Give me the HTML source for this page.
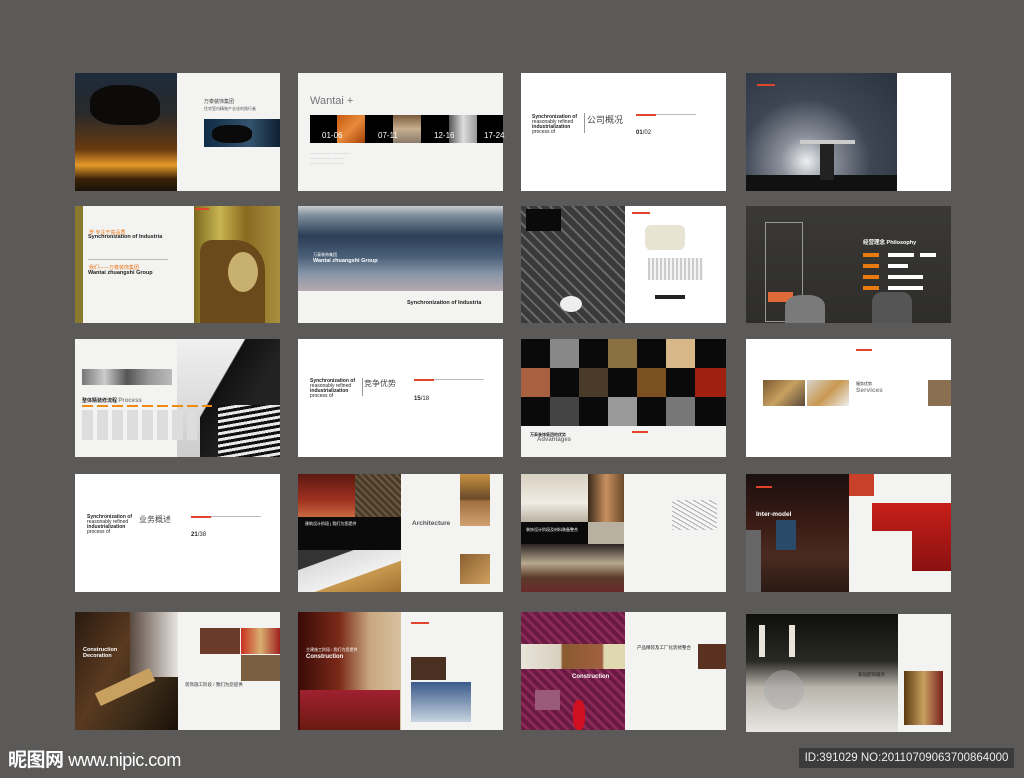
<!DOCTYPE html>
<html><head><meta charset="utf-8"><style>
body{margin:0;width:1024px;height:778px;background:#5b5a58;position:relative;overflow:hidden;font-family:"Liberation Sans","Noto Sans CJK SC",sans-serif}
div{position:absolute;box-sizing:border-box}
.w{background:#f3f3f2}
.t{font-size:4px;color:#555;line-height:5px;white-space:nowrap}
.h{font-weight:bold;color:#222;white-space:nowrap}
.r{background:#e0452b;height:2px}
.g{background:#bbb;height:1px}
</style></head><body>

<!-- ROW 1 -->
<div class="w" style="left:75px;top:73px;width:205px;height:118px"></div>
<div style="left:75px;top:73px;width:102px;height:118px;background:linear-gradient(180deg,#1c2b3c 0%,#2a2a2a 35%,#6a3a10 65%,#e89a2a 78%,#3a2208 90%,#1a1208 100%)"></div>
<div style="left:90px;top:85px;width:70px;height:40px;background:#0d0b0a;border-radius:40% 50% 30% 40%"></div>
<div style="left:204px;top:119px;width:76px;height:28px;background:linear-gradient(90deg,#0f2a44,#33536e 60%,#0e2033)"></div>
<div style="left:212px;top:125px;width:40px;height:18px;background:#0a0a0a;border-radius:40%"></div>
<div class="t" style="left:204px;top:100px;color:#444;font-size:5px">万泰装饰集团</div>
<div class="t" style="left:204px;top:106px">住宅室内精装产业化的践行者</div>

<div class="w" style="left:298px;top:73px;width:205px;height:118px"></div>
<div style="left:310px;top:95px;font-size:11px;color:#777">Wantai +</div>
<div style="left:310px;top:115px;width:193px;height:28px;background:#000"></div>
<div style="left:337px;top:115px;width:28px;height:28px;background:linear-gradient(135deg,#c85a10,#e88a3a,#a04008)"></div>
<div style="left:393px;top:115px;width:28px;height:28px;background:linear-gradient(180deg,#7a5a3a,#c8b090,#8a7a6a)"></div>
<div style="left:449px;top:115px;width:28px;height:28px;background:linear-gradient(90deg,#555,#ddd,#999)"></div>
<div style="left:322px;top:131px;color:#fff;font-size:8px">01-06</div>
<div style="left:378px;top:131px;color:#fff;font-size:8px">07-11</div>
<div style="left:434px;top:131px;color:#fff;font-size:8px">12-16</div>
<div style="left:484px;top:131px;color:#fff;font-size:8px">17-24</div>
<div class="t" style="left:310px;top:150px;color:#aaa">—— ——— —— ——<br>——— —— ———<br>—— ———— ——</div>

<div style="left:521px;top:73px;width:205px;height:118px;background:#fff"></div>
<div class="h" style="left:532px;top:115px;font-size:5px;line-height:5px">Synchronization of<br><span style="font-weight:normal">reasonably refined</span><br>industrialization<br><span style="font-weight:normal">process of</span></div>
<div style="left:584px;top:113px;width:1px;height:20px;background:#999"></div>
<div style="left:587px;top:113px;font-size:9px;color:#444">公司概况</div>
<div class="r" style="left:636px;top:114px;width:20px"></div><div class="g" style="left:656px;top:114px;width:40px"></div>
<div class="h" style="left:636px;top:130px;font-size:6px">01<span style="font-weight:normal">/02</span></div>

<div style="left:746px;top:73px;width:205px;height:118px;background:#fff"></div>
<div style="left:746px;top:73px;width:151px;height:118px;background:radial-gradient(ellipse at 40% 75%,#eef0f2 0%,#8a909a 20%,#3e4654 50%,#2a3240 100%)"></div>
<div style="left:746px;top:175px;width:151px;height:16px;background:#111"></div>
<div style="left:820px;top:140px;width:14px;height:40px;background:#222"></div>
<div style="left:800px;top:140px;width:55px;height:4px;background:#ccc"></div>
<div class="r" style="left:757px;top:84px;width:18px"></div>

<!-- ROW 2 -->
<div class="w" style="left:75px;top:206px;width:205px;height:117px"></div>
<div style="left:75px;top:206px;width:8px;height:117px;background:#8a7a30"></div>
<div style="left:194px;top:206px;width:86px;height:117px;background:linear-gradient(90deg,#7a6a20,#c8b450 30%,#8a6a20 60%,#a89040)"></div>
<div style="left:200px;top:240px;width:65px;height:83px;background:#6a4a1a;border-radius:12px 30px 0 0"></div>
<div style="left:228px;top:252px;width:30px;height:40px;background:#c8b070;border-radius:50%"></div>
<div class="r" style="left:195px;top:208px;width:14px"></div>
<div class="h" style="left:88px;top:234px;font-size:5.5px">Synchronization of Industria</div>
<div style="left:89px;top:229px;font-size:5px;color:#e87a20">罗 专注于高品质</div>
<div class="h" style="left:88px;top:270px;font-size:5.5px">Wantai zhuangshi Group</div>
<div style="left:89px;top:264px;font-size:5px;color:#e87a20">我们——万泰装饰集团</div>
<div class="g" style="left:88px;top:259px;width:80px"></div>

<div class="w" style="left:298px;top:206px;width:205px;height:117px"></div>
<div style="left:298px;top:206px;width:205px;height:85px;background:linear-gradient(180deg,#c8ccd0 0%,#7a8a98 12%,#2a3e56 35%,#4a6078 60%,#8896a8 80%,#b8a8b0 100%)"></div>
<div class="h" style="left:313px;top:258px;font-size:5.5px;color:#fff">Wantai zhuangshi Group</div>
<div class="t" style="left:313px;top:252px;color:#fff">万泰装饰集团</div>
<div class="h" style="left:407px;top:300px;font-size:5.5px">Synchronization of Industria</div>

<div style="left:521px;top:206px;width:205px;height:117px;background:#fff"></div>
<div style="left:521px;top:206px;width:104px;height:117px;background:repeating-linear-gradient(45deg,#3a3a3a 0 6px,#6a6a6a 6px 8px),#444"></div>
<div style="left:526px;top:209px;width:35px;height:22px;background:#0a0a0a"></div>
<div style="left:560px;top:296px;width:22px;height:16px;background:#eee;border-radius:50%"></div>
<div style="left:645px;top:225px;width:40px;height:25px;background:#e8e4d4;border-radius:6px"></div>
<div style="left:648px;top:258px;width:55px;height:22px;background:repeating-linear-gradient(90deg,#ccc 0 2px,#f4f4f4 2px 4px)"></div>
<div style="left:655px;top:295px;width:30px;height:4px;background:#222"></div>
<div class="r" style="left:632px;top:212px;width:18px"></div>

<div style="left:746px;top:206px;width:205px;height:117px;background:linear-gradient(180deg,#3a3936,#2e2d2a)"></div>
<div style="left:765px;top:222px;width:38px;height:100px;border:1px solid #999"></div>
<div style="left:768px;top:292px;width:25px;height:10px;background:#e06a3a"></div>
<div style="left:785px;top:295px;width:40px;height:28px;background:#7a7a7a;border-radius:40% 40% 0 0"></div>
<div style="left:872px;top:292px;width:40px;height:31px;background:#555;border-radius:10px 10px 0 0"></div>
<div class="h" style="left:863px;top:238px;font-size:5.5px;color:#fff">经营理念 Philosophy</div>
<div style="left:863px;top:253px;width:16px;height:4px;background:#e87a10"></div>
<div style="left:863px;top:264px;width:16px;height:4px;background:#e87a10"></div>
<div style="left:863px;top:275px;width:16px;height:4px;background:#e87a10"></div>
<div style="left:863px;top:286px;width:16px;height:4px;background:#e87a10"></div>
<div style="left:888px;top:253px;width:26px;height:4px;background:#fff"></div>
<div style="left:888px;top:264px;width:20px;height:4px;background:#fff"></div>
<div style="left:888px;top:275px;width:35px;height:4px;background:#fff"></div>
<div style="left:888px;top:286px;width:35px;height:4px;background:#fff"></div>
<div style="left:920px;top:253px;width:16px;height:4px;background:#fff"></div>

<!-- ROW 3 -->
<div class="w" style="left:75px;top:339px;width:205px;height:118px"></div>
<div style="left:177px;top:339px;width:103px;height:118px;background:linear-gradient(180deg,#f0f0f0,#ccc)"></div>
<div style="left:200px;top:339px;width:80px;height:118px;background:linear-gradient(120deg,transparent 30%,#111 31%,#222 60%)"></div>
<div style="left:218px;top:405px;width:62px;height:52px;background:repeating-linear-gradient(170deg,#111 0 3px,#e8e8e8 3px 6px)"></div>
<div style="left:82px;top:369px;width:90px;height:16px;background:linear-gradient(90deg,#777,#ccc,#555,#999,#bbb)"></div>
<div class="h" style="left:82px;top:397px;font-size:5px">整体精装修流程 <span style="color:#888;font-size:6px">Process</span></div>
<div style="left:82px;top:405px;width:130px;height:2px;background:repeating-linear-gradient(90deg,#f08a10 0 11px,transparent 11px 15px)"></div>
<div style="left:82px;top:410px;width:115px;height:30px;background:repeating-linear-gradient(90deg,#ddd 0 11px,transparent 11px 15px)"></div>

<div style="left:298px;top:339px;width:205px;height:118px;background:#fff"></div>
<div class="h" style="left:310px;top:379px;font-size:5px;line-height:5px">Synchronization of<br><span style="font-weight:normal">reasonably refined</span><br>industrialization<br><span style="font-weight:normal">process of</span></div>
<div style="left:362px;top:378px;width:1px;height:18px;background:#999"></div>
<div style="left:364px;top:378px;font-size:8px;color:#444">竞争优势</div>
<div class="r" style="left:414px;top:379px;width:20px"></div><div class="g" style="left:434px;top:379px;width:50px"></div>
<div class="h" style="left:414px;top:396px;font-size:6px">15<span style="font-weight:normal">/18</span></div>

<div class="w" style="left:521px;top:339px;width:205px;height:118px"></div>
<div style="left:521px;top:339px;width:205px;height:87px;background:#0a0a0a"></div>
<div style="left:550px;top:339px;width:29px;height:29px;background:#888"></div>
<div style="left:608px;top:339px;width:29px;height:29px;background:#8a7040"></div>
<div style="left:666px;top:339px;width:29px;height:29px;background:#d8b888"></div>
<div style="left:521px;top:368px;width:29px;height:29px;background:#a86040"></div>
<div style="left:579px;top:368px;width:29px;height:29px;background:#4a3a2a"></div>
<div style="left:637px;top:368px;width:29px;height:29px;background:#7a5020"></div>
<div style="left:695px;top:368px;width:31px;height:29px;background:#a02010"></div>
<div style="left:550px;top:397px;width:29px;height:29px;background:#444"></div>
<div style="left:608px;top:397px;width:29px;height:29px;background:#999"></div>
<div style="left:666px;top:397px;width:29px;height:29px;background:#777"></div>
<div class="h" style="left:530px;top:432px;font-size:4px">万泰装饰集团的优势</div>
<div class="h" style="left:537px;top:437px;font-size:6px;color:#777">Advantages</div>
<div class="r" style="left:632px;top:431px;width:16px"></div>

<div style="left:746px;top:339px;width:205px;height:118px;background:#fff"></div>
<div style="left:763px;top:380px;width:42px;height:26px;background:linear-gradient(135deg,#7a5a30,#c8a060,#5a4a3a)"></div>
<div style="left:807px;top:380px;width:42px;height:26px;background:linear-gradient(135deg,#d8d4cc,#c89850,#eee)"></div>
<div style="left:928px;top:380px;width:23px;height:26px;background:#8a7050"></div>
<div class="h" style="left:856px;top:387px;font-size:6.5px;color:#888">Services</div>
<div class="t" style="left:856px;top:381px;color:#222">服务优势</div>
<div class="r" style="left:856px;top:349px;width:16px"></div>

<!-- ROW 4 -->
<div style="left:75px;top:474px;width:205px;height:118px;background:#fff"></div>
<div class="h" style="left:87px;top:515px;font-size:5px;line-height:5px">Synchronization of<br><span style="font-weight:normal">reasonably refined</span><br>industrialization<br><span style="font-weight:normal">process of</span></div>
<div style="left:139px;top:514px;font-size:8px;color:#444">业务概述</div>
<div class="r" style="left:191px;top:516px;width:20px"></div><div class="g" style="left:211px;top:516px;width:50px"></div>
<div class="h" style="left:191px;top:532px;font-size:6px">21<span style="font-weight:normal">/38</span></div>

<div class="w" style="left:298px;top:474px;width:205px;height:118px"></div>
<div style="left:298px;top:474px;width:57px;height:43px;background:linear-gradient(180deg,#5a1a10,#a03020 60%,#c86a40)"></div>
<div style="left:355px;top:474px;width:46px;height:43px;background:repeating-linear-gradient(45deg,#4a3a2a 0 3px,#6a5a40 3px 5px)"></div>
<div style="left:298px;top:517px;width:103px;height:33px;background:#0a0a0a"></div>
<div class="t" style="left:305px;top:521px;color:#fff">建筑设计阶段 | 我们为您提供</div>
<div style="left:298px;top:550px;width:103px;height:42px;background:linear-gradient(160deg,#333 0 25%,#ddd 26%,#f0f0f0 60%,#c89a50 61%,#a07030)"></div>
<div style="left:460px;top:474px;width:30px;height:52px;background:linear-gradient(180deg,#c89040,#6a4a2a 48%,#a07040 52%,#d0a070)"></div>
<div style="left:460px;top:554px;width:30px;height:30px;background:linear-gradient(135deg,#8a6030,#d0a060)"></div>
<div class="h" style="left:412px;top:520px;font-size:6.5px;color:#555">Architecture</div>

<div class="w" style="left:521px;top:474px;width:205px;height:118px"></div>
<div style="left:521px;top:474px;width:67px;height:48px;background:linear-gradient(180deg,#d8d0c0,#f0ece4 60%,#b8b0a0)"></div>
<div style="left:588px;top:474px;width:36px;height:48px;background:linear-gradient(90deg,#3a2a1a,#c89060,#6a4a2a)"></div>
<div style="left:521px;top:522px;width:67px;height:22px;background:#0a0a0a"></div>
<div style="left:588px;top:522px;width:36px;height:22px;background:#b8b0a0"></div>
<div style="left:521px;top:544px;width:103px;height:48px;background:linear-gradient(180deg,#2a2420,#b8a890 40%,#5a3a2a 70%,#6a2a2a)"></div>
<div class="t" style="left:526px;top:527px;color:#fff">装饰设计阶段及材料装备整合</div>
<div style="left:672px;top:500px;width:45px;height:30px;background:repeating-linear-gradient(30deg,#aaa 0 1px,#f6f6f6 1px 4px)"></div>

<div class="w" style="left:746px;top:474px;width:205px;height:118px"></div>
<div style="left:746px;top:474px;width:103px;height:118px;background:linear-gradient(180deg,#1a1010,#3a1a14 40%,#4a2a20 70%,#2a1a14)"></div>
<div style="left:776px;top:520px;width:20px;height:30px;background:#2a4a6a"></div>
<div style="left:746px;top:530px;width:15px;height:62px;background:#666"></div>
<div class="h" style="left:756px;top:511px;font-size:6.5px;color:#fff">Inter-model</div>
<div style="left:849px;top:474px;width:25px;height:22px;background:#c8402a"></div>
<div style="left:872px;top:503px;width:79px;height:68px;background:linear-gradient(180deg,#c8201a,#8a1010)"></div>
<div style="left:872px;top:531px;width:40px;height:45px;background:#f3f3f2"></div>
<div class="r" style="left:756px;top:486px;width:16px"></div>

<!-- ROW 5 -->
<div class="w" style="left:75px;top:612px;width:205px;height:118px"></div>
<div style="left:75px;top:612px;width:103px;height:118px;background:linear-gradient(120deg,#2a1a10,#5a3a20 40%,#3a2a18 70%,#1a1008)"></div>
<div style="left:130px;top:612px;width:48px;height:65px;background:linear-gradient(90deg,#5a4a40,#e8e4e0)"></div>
<div style="left:95px;top:680px;width:60px;height:14px;background:#c8a060;transform:rotate(-25deg)"></div>
<div class="h" style="left:83px;top:647px;font-size:5.5px;color:#fff;line-height:6px">Construction<br>Decoration</div>
<div style="left:200px;top:628px;width:40px;height:26px;background:#6a3a2a"></div>
<div style="left:241px;top:628px;width:39px;height:26px;background:linear-gradient(90deg,#c83020,#d8b070,#a02020)"></div>
<div style="left:241px;top:655px;width:39px;height:26px;background:#7a6040"></div>
<div class="t" style="left:185px;top:682px;color:#333;font-size:4.5px">装饰施工阶段 / 我们为您提供</div>

<div class="w" style="left:298px;top:612px;width:205px;height:118px"></div>
<div style="left:298px;top:612px;width:103px;height:118px;background:linear-gradient(90deg,#3a0a08,#7a2a18 40%,#c8a880 70%,#d8c0a0)"></div>
<div style="left:300px;top:690px;width:100px;height:40px;background:linear-gradient(180deg,#a02030,#6a1a10)"></div>
<div class="h" style="left:306px;top:654px;font-size:6px;color:#fff">Construction</div>
<div class="t" style="left:306px;top:647px;color:#fff">主建施工阶段 / 我们为您提供</div>
<div style="left:411px;top:657px;width:35px;height:23px;background:#4a3020"></div>
<div style="left:411px;top:682px;width:60px;height:40px;background:linear-gradient(180deg,#3a5a8a,#c8d4e0)"></div>
<div class="r" style="left:411px;top:622px;width:18px"></div>

<div class="w" style="left:521px;top:612px;width:205px;height:118px"></div>
<div style="left:521px;top:612px;width:104px;height:118px;background:repeating-linear-gradient(45deg,#6a1a40 0 4px,#8a2a58 4px 7px)"></div>
<div style="left:521px;top:644px;width:104px;height:25px;background:linear-gradient(90deg,#e8e4d8,#d8d0c0 38%,#8a5a30 40%,#a06040 78%,#e0d8b0 80%)"></div>
<div style="left:573px;top:700px;width:12px;height:30px;background:#d01020;border-radius:40%"></div>
<div style="left:535px;top:690px;width:25px;height:20px;background:#9a5a7a"></div>
<div class="h" style="left:572px;top:674px;font-size:6px;color:#fff">Construction</div>
<div style="left:698px;top:644px;width:28px;height:25px;background:#5a3020"></div>
<div class="t" style="left:637px;top:645px;color:#222;font-size:4.5px">产品精装及工厂化装修整合</div>

<div class="w" style="left:746px;top:614px;width:205px;height:118px"></div>
<div style="left:746px;top:614px;width:152px;height:118px;background:linear-gradient(180deg,#0e0e0c,#2a2a24 40%,#b8b4ac 62%,#e8e6e2)"></div>
<div style="left:759px;top:625px;width:6px;height:32px;background:#e8e4dc"></div>
<div style="left:789px;top:625px;width:6px;height:32px;background:#e8e4dc"></div>
<div style="left:764px;top:670px;width:40px;height:40px;background:#aaa;border-radius:50%;opacity:.5"></div>
<div style="left:904px;top:671px;width:39px;height:54px;background:linear-gradient(90deg,#5a3a10,#c8a060,#7a2020)"></div>
<div class="t" style="left:858px;top:672px;color:#222;font-size:4.5px">家居配饰服务</div>

<!-- bottom bar -->
<div style="left:8px;top:745px;color:#fff;font-size:19px;font-weight:bold;white-space:nowrap;letter-spacing:-0.5px">昵图网 <span style="font-weight:normal;font-size:18px">www.nipic.com</span></div>
<div style="left:799px;top:748px;width:215px;height:20px;background:#3b3b3b;color:#eee;font-size:11.5px;line-height:20px;text-align:center;white-space:nowrap">ID:391029 NO:20110709063700864000</div>
</body></html>
